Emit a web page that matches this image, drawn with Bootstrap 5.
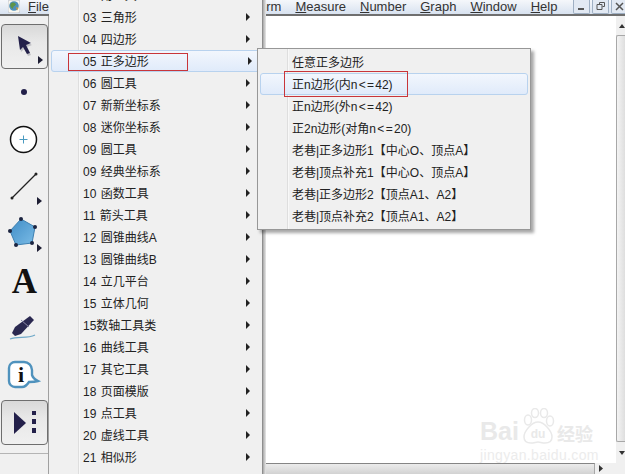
<!DOCTYPE html>
<html lang="zh">
<head>
<meta charset="utf-8">
<title>Sketchpad</title>
<link rel="stylesheet" href="https://cdn.jsdelivr.net/npm/bootstrap@5.3.0/dist/css/bootstrap.min.css">
<style>
html,body{margin:0;width:625px;height:474px;overflow:hidden;background:#fff}
body{font-family:"Liberation Sans","Noto Sans CJK SC",sans-serif;font-size:12px;color:#222;position:relative}
.shell{width:625px;height:474px}
.menubar{height:16px;background:linear-gradient(#f5f7fb,#d8e2f0);border-bottom:2px solid #6f6f6f;font-size:13px;padding-left:8px;color:#333;line-height:14px;flex:none;overflow:hidden;white-space:nowrap}
.appglobe{width:12px;height:13px;flex:none;margin-right:8px}
.mfile{width:231px;flex:none}
.mrest{gap:14px}
.winbtns{margin-left:16px;gap:2px}
.winbtn{width:17px;height:14px;flex:none;border:1px solid #9fb0c4;border-top:0;background:#e2e9f3;border-radius:0 0 2px 2px;display:flex;align-items:center;justify-content:center}
.workrow{height:458px;flex:none}
.toolrail{width:49px;background:#f0f0f0;border-right:1px solid #a0a0a0;flex:none;padding:7px 1px 0;position:relative}
.toolbtn{width:47px;height:47px;flex:none;display:flex;align-items:center;justify-content:center}
.toolbtn svg{flex:none}
.toolbtn.on{height:45px;margin:1px 0;border:1px solid #6e6e6e;border-radius:4px;background:linear-gradient(#d8d8d8,#e8e8e8 40%,#f0f0f0)}
.rail-a{font:700 35px/1 "Liberation Serif",serif;color:#111}
.railrule{border-top:1px solid #b4b4b4;margin:7px -1px 0}
.rightcol{min-width:0}
.canvasrow{height:447px;flex:none}
.sheet{flex:1;background:#fff}
.vscroll{width:9px;background:#f0f0f0;flex:none}
.varrow{height:19px;flex:none;display:flex;align-items:center;justify-content:center;padding-left:3px}
.varrow.lower{height:auto;flex:1}
.vthumb{height:407px;flex:none;border:1px solid #a8a8a8;border-right:0;background:linear-gradient(90deg,#f4f4f4,#dedede);border-radius:2px 0 0 2px}
.hscroll{height:11px;flex:none;background:#f0f0f0}
.hthumb{width:546px;flex:none;border-top:1px solid #858585;border-right:1px solid #a8a8a8;background:linear-gradient(#ececec,#d2d2d2)}
.harrow{flex:1;display:flex;align-items:center;justify-content:center;padding-right:19px}
.popmenu{position:absolute;background:#f0f0f0;border:1px solid #979797;font-size:12px;word-spacing:1px;color:#222}
.main-menu{left:49px;top:-25px;width:214px;height:499px;border-width:0 1px 0 0;border-color:#8e8e8e;padding-top:9px}
.main-shade{position:absolute;left:263px;top:0;width:3px;height:474px;background:linear-gradient(90deg,#a8a8a8,#e8e8e8)}
.side-menu{left:257px;top:48px;width:274px;height:182px;padding:2px;box-shadow:3px 3px 3px rgba(0,0,0,.35)}
.gutter{position:absolute;top:0;bottom:0;border-left:1px solid #dedede;border-right:1px solid #f8f8f8;width:2px}
.main-menu .gutter{left:29px}
.side-menu .gutter{left:29px}
.rowitem{height:22px;line-height:24px;white-space:nowrap;position:relative}
.main-menu .rowitem{padding-left:34px}
.side-menu .rowitem{padding-left:32px}
.rowitem.hot{background:linear-gradient(#f3f7fd,#dfeafa);outline:1px solid #b8d2ee;outline-offset:-1px;border-radius:3px}
.main-menu .rowitem.hot{margin-left:2px;padding-left:32px;margin-right:-9px}
.subarrow{position:absolute;left:197px;top:7px;width:0;height:0;border-left:4px solid #222;border-top:4px solid transparent;border-bottom:4px solid transparent}
.cmp{letter-spacing:1.3px}
.redbox{position:absolute;border:1px solid #c8353a;pointer-events:none}
.redbox.first{left:68px;top:53px;width:120px;height:18px}
.redbox.second{left:284px;top:71px;width:124px;height:26px}
.wm-mark{position:absolute;left:480px;top:407px;color:#e9e9e9;line-height:1;pointer-events:none}
.wm-top{height:37px;font-size:25px;font-weight:700}
.wm-top svg{flex:none;margin:0 2px}
.wm-cn{font-size:18px}
.wm-sub{font-size:14px;margin-top:4px;letter-spacing:.35px;color:#ececec}
</style>
</head>
<body>
<div class="shell d-flex flex-column">
  <div class="menubar d-flex">
    <svg class="appglobe" viewBox="0 0 12 13"><rect width="12" height="13" rx="2" fill="#faf8f0" stroke="#c4c8d0"/><circle cx="6" cy="6" r="4.800" fill="#4f8fb8"/><path d="M2.500 4c2-2.500 4.500-1.500 5.500.5-1 2-3 1-3 4.500-2-1-3.500-3-2.500-5z" fill="#5f9448"/><path d="M8 7l2.500 1-1.500 2.500z" fill="#d09a38"/></svg>
    <span class="mfile"><u>F</u>ile</span>
    <span class="mrest d-flex"><span>orm</span><span><u>M</u>easure</span><span><u>N</u>umber</span><span><u>G</u>raph</span><span><u>W</u>indow</span><span><u>H</u>elp</span></span>
    <span class="winbtns d-flex">
      <span class="winbtn"><svg width="9" height="9"><path d="M1 7h6" stroke="#555" stroke-width="2"/></svg></span>
      <span class="winbtn"><svg width="10" height="9"><path d="M3.500 2.500V.5h5v4h-2M1 2.500h5v5H1z" fill="none" stroke="#555"/></svg></span>
      <span class="winbtn"><svg width="9" height="9"><path d="M1 1l7 7M8 1L1 8" stroke="#555" stroke-width="1.500"/></svg></span>
    </span>
  </div>
  <div class="workrow d-flex">
    <div class="toolrail d-flex flex-column">
      <div class="toolbtn on"><svg width="47" height="47" viewBox="1 23 47 47"><path d="M19 38L32 45 27 47 31 55 28 56 24 49 21 52Z" fill="#9a9aa4" opacity=".55"/><path d="M18 36L31 43 26 45 30 53 27 54 23 47 20 50Z" fill="#23204a"/><path d="M38 56l5 4-5 4z" fill="#1d1d33"/></svg></div>
      <div class="toolbtn"><svg width="47" height="47" viewBox="1 70 47 47"><circle cx="24" cy="92" r="3" fill="#23204a"/></svg></div>
      <div class="toolbtn"><svg width="47" height="47" viewBox="1 117 47 47"><circle cx="23.500" cy="139.500" r="13" fill="#fff" stroke="#111" stroke-width="1.500"/><path d="M23.500 135.500v8M19.500 139.500h8" stroke="#4a9ac0"/></svg></div>
      <div class="toolbtn"><svg width="47" height="47" viewBox="1 164 47 47"><path d="M12 198L36 174" stroke="#222" stroke-width="1.300"/><circle cx="12" cy="198" r="1.500" fill="#222"/><circle cx="36" cy="174" r="1.500" fill="#222"/><path d="M37 197l5 4-5 4z" fill="#1d1d33"/></svg></div>
      <div class="toolbtn"><svg width="47" height="47" viewBox="1 211 47 47"><defs><linearGradient id="penta" x1="0" y1="0" x2="1" y2="1"><stop offset="0" stop-color="#3f8cc6"/><stop offset="1" stop-color="#7bbce6"/></linearGradient></defs><path d="M21 219L35 227 32 243 16 245 10 231Z" fill="url(#penta)" stroke="#3c7fb0"/><g fill="#1c2440"><circle cx="21" cy="219" r="2"/><circle cx="35" cy="227" r="2"/><circle cx="32" cy="243" r="2"/><circle cx="16" cy="245" r="2"/><circle cx="10" cy="231" r="2"/></g><path d="M37 244l5 4-5 4z" fill="#1d1d33"/></svg></div>
      <div class="toolbtn"><span class="rail-a">A</span></div>
      <div class="toolbtn"><svg width="47" height="47" viewBox="1 305 47 47"><path d="M12 333l3-6 15-11 4 4-13 14-6 2z" fill="#2a2850"/><path d="M21 320l8 7" stroke="#8a88a8"/><path d="M10 339C18 336 27 339 35 335" stroke="#6fa8c8" stroke-width="1.300" fill="none"/></svg></div>
      <div class="toolbtn"><svg width="47" height="47" viewBox="1 352 47 47"><path d="M15 362h9a8 8 0 0 1 8 8v5c1 3 4 5 6 6-3 1-6 1-9 1-2 3-4 5-7 5h-7a6 6 0 0 1-6-6v-13a6 6 0 0 1 6-6z" fill="#fff" stroke="#4f92bd" stroke-width="2.400"/><text x="21" y="382" text-anchor="middle" font-family="Liberation Serif" font-weight="700" font-size="22" fill="#111">i</text></svg></div>
      <div class="toolbtn on"><svg width="47" height="47" viewBox="1 399 47 47"><path d="M14 412v22l12-11z" fill="#23204a"/><path d="M32 411h4v4h-4zM32 419h4v5h-4zM32 428h4v5h-4z" fill="#23204a"/></svg></div>
      <div class="railrule"></div>
    </div>
    <div class="rightcol flex-grow-1 d-flex flex-column">
      <div class="canvasrow d-flex">
        <div class="sheet"></div>
        <div class="vscroll d-flex flex-column">
          <div class="varrow"><svg width="6" height="4"><path d="M0 4l3-4 3 4z" fill="#333"/></svg></div>
          <div class="vthumb"></div>
          <div class="varrow lower"><svg width="6" height="4"><path d="M0 0l3 4 3-4z" fill="#333"/></svg></div>
        </div>
      </div>
      <div class="hscroll d-flex">
        <div class="hthumb"></div>
        <div class="harrow"><svg width="4" height="7"><path d="M0 0l4 3.500-4 3.500z" fill="#333"/></svg></div>
      </div>
    </div>
  </div>
</div>

<div class="main-shade"></div>
<div class="popmenu main-menu">
  <div class="gutter"></div>
  <div class="rowitem">02 角工具<i class="subarrow"></i></div>
  <div class="rowitem">03 三角形<i class="subarrow"></i></div>
  <div class="rowitem">04 四边形<i class="subarrow"></i></div>
  <div class="rowitem hot">05 正多边形<i class="subarrow"></i></div>
  <div class="rowitem">06 圆工具<i class="subarrow"></i></div>
  <div class="rowitem">07 新新坐标系<i class="subarrow"></i></div>
  <div class="rowitem">08 迷你坐标系<i class="subarrow"></i></div>
  <div class="rowitem">09 圆工具<i class="subarrow"></i></div>
  <div class="rowitem">09 经典坐标系<i class="subarrow"></i></div>
  <div class="rowitem">10 函数工具<i class="subarrow"></i></div>
  <div class="rowitem">11 箭头工具<i class="subarrow"></i></div>
  <div class="rowitem">12 圆锥曲线A<i class="subarrow"></i></div>
  <div class="rowitem">13 圆锥曲线B<i class="subarrow"></i></div>
  <div class="rowitem">14 立几平台<i class="subarrow"></i></div>
  <div class="rowitem">15 立体几何<i class="subarrow"></i></div>
  <div class="rowitem">15数轴工具类<i class="subarrow"></i></div>
  <div class="rowitem">16 曲线工具<i class="subarrow"></i></div>
  <div class="rowitem">17 其它工具<i class="subarrow"></i></div>
  <div class="rowitem">18 页面模版<i class="subarrow"></i></div>
  <div class="rowitem">19 点工具<i class="subarrow"></i></div>
  <div class="rowitem">20 虚线工具<i class="subarrow"></i></div>
  <div class="rowitem">21 相似形<i class="subarrow"></i></div>
</div>

<div class="popmenu side-menu">
  <div class="gutter"></div>
  <div class="rowitem">任意正多边形</div>
  <div class="rowitem hot">正n边形(内<span class="cmp">n&lt;=</span>42)</div>
  <div class="rowitem">正n边形(外<span class="cmp">n&lt;=</span>42)</div>
  <div class="rowitem">正2n边形(对角<span class="cmp">n&lt;=</span>20)</div>
  <div class="rowitem">老巷|正多边形1【中心O、顶点A】</div>
  <div class="rowitem">老巷|顶点补充1【中心O、顶点A】</div>
  <div class="rowitem">老巷|正多边形2【顶点A1、A2】</div>
  <div class="rowitem">老巷|顶点补充2【顶点A1、A2】</div>
</div>

<div class="redbox first"></div>
<div class="redbox second"></div>
<div class="wm-mark">
  <div class="wm-top d-flex align-items-end">
    <span>Bai</span>
    <svg width="34" height="36" viewBox="0 0 34 36"><g fill="none" stroke="#e9e9e9" stroke-width="1.500"><ellipse cx="7" cy="12" rx="3.500" ry="5"/><ellipse cx="14" cy="5" rx="3.500" ry="4.500"/><ellipse cx="23" cy="5" rx="3.500" ry="4.500"/><ellipse cx="29" cy="13" rx="3.500" ry="5"/><path d="M17 14c6 0 14 9 14 15 0 5-4 6-7 6-3 0-5-1-7-1s-4 1-7 1c-3 0-7-1-7-6 0-6 8-15 14-15z"/></g><text x="17" y="30" text-anchor="middle" font-family="Liberation Sans" font-size="12" font-weight="700" fill="#e9e9e9">du</text></svg>
    <span class="wm-cn">经验</span>
  </div>
  <div class="wm-sub">jingyan.baidu.com</div>
</div>
</body>
</html>
